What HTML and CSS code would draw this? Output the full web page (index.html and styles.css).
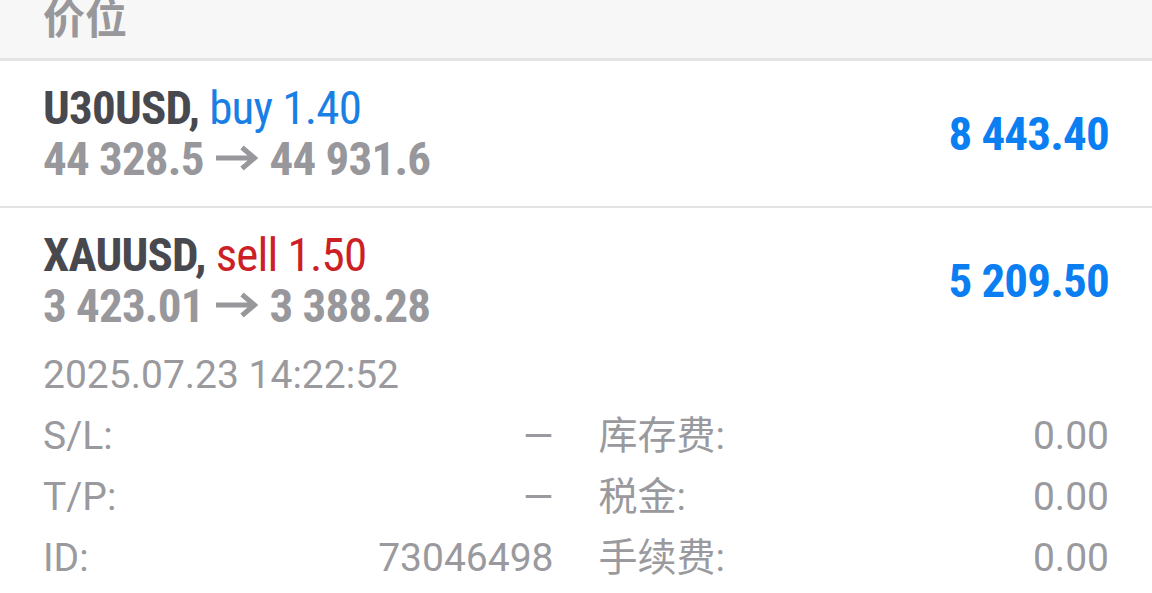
FILE: index.html
```html
<!DOCTYPE html>
<html lang="zh">
<head>
    <meta charset="UTF-8">
    <meta name="viewport" content="width=device-width, initial-scale=1.0">
    <title>持仓</title>
    <link rel="stylesheet" href="styles.css">
</head>
<body>
    <div class="section-header">
        <span class="section-title">价位</span>
    </div>

    <div class="position">
        <div class="position-main">
            <div class="position-info">
                <div class="position-title"><span class="symbol">U30USD,</span> <span class="deal buy">buy 1.40</span></div>
                <div class="position-prices">44 328.5<svg class="arrow" viewBox="0 0 42 26"><path d="M0 13H38M26 2.5L38.5 13L26 23.5"/></svg>44 931.6</div>
            </div>
            <div class="position-profit">8 443.40</div>
        </div>
    </div>

    <div class="position">
        <div class="position-main">
            <div class="position-info">
                <div class="position-title"><span class="symbol">XAUUSD,</span> <span class="deal sell">sell 1.50</span></div>
                <div class="position-prices">3 423.01<svg class="arrow" viewBox="0 0 42 26"><path d="M0 13H38M26 2.5L38.5 13L26 23.5"/></svg>3 388.28</div>
            </div>
            <div class="position-profit">5 209.50</div>
        </div>

        <div class="position-time">2025.07.23 14:22:52</div>
        <div class="details">
            <div class="detail"><span>S/L:</span><span>—</span></div>
            <div class="detail"><span>库存费:</span><span>0.00</span></div>
            <div class="detail"><span>T/P:</span><span>—</span></div>
            <div class="detail"><span>税金:</span><span>0.00</span></div>
            <div class="detail"><span>ID:</span><span>73046498</span></div>
            <div class="detail"><span>手续费:</span><span>0.00</span></div>
        </div>
    </div>
</body>
</html>
```

FILE: styles.css
```css
body {
    margin: 0;
    background-color: #fff;
    font-family: Roboto, "Noto Sans CJK SC", sans-serif;
    color: #9a9a9e;
}

.section-header {
    height: 58px;
    padding: 0 43px;
    background-color: #f7f7f7;
    border-bottom: 3px solid #e4e4e4;
}

.section-title {
    display: block;
    font-family: "Noto Sans CJK SC", sans-serif;
    font-weight: bold;
    font-size: 42px;
    line-height: 32px;
    color: #98989c;
}

.position {
    padding: 21px 43px 22px;
    border-bottom: 2px solid #e3e3e3;
}

.position-main {
    display: flex;
    align-items: center;
    justify-content: space-between;
}

.position-title,
.position-prices,
.position-profit {
    font-family: "Roboto Condensed", "Liberation Sans Narrow", Roboto, sans-serif;
    font-stretch: condensed;
    font-size: 47px;
    letter-spacing: -0.8px;
    line-height: 51px;
    white-space: nowrap;
}

.symbol {
    font-weight: bold;
    color: #48484f;
}

.deal.buy {
    color: #1a7fe4;
}

.deal.sell {
    color: #cc1f26;
}

.position-prices {
    font-weight: bold;
    color: #97979c;
}

.arrow {
    width: 42px;
    height: 26px;
    margin: 0 12px;
    vertical-align: 4px;
    fill: none;
    stroke: #97979c;
    stroke-width: 5px;
}

.position-profit {
    font-weight: bold;
    color: #0b7ff2;
}

.position-time {
    margin-top: 14px;
    font-size: 39px;
    line-height: 61px;
}

.details {
    display: grid;
    grid-template-columns: 1fr 1fr;
    column-gap: 45px;
}

.detail {
    display: flex;
    justify-content: space-between;
    font-size: 39px;
    line-height: 61px;
}
```
